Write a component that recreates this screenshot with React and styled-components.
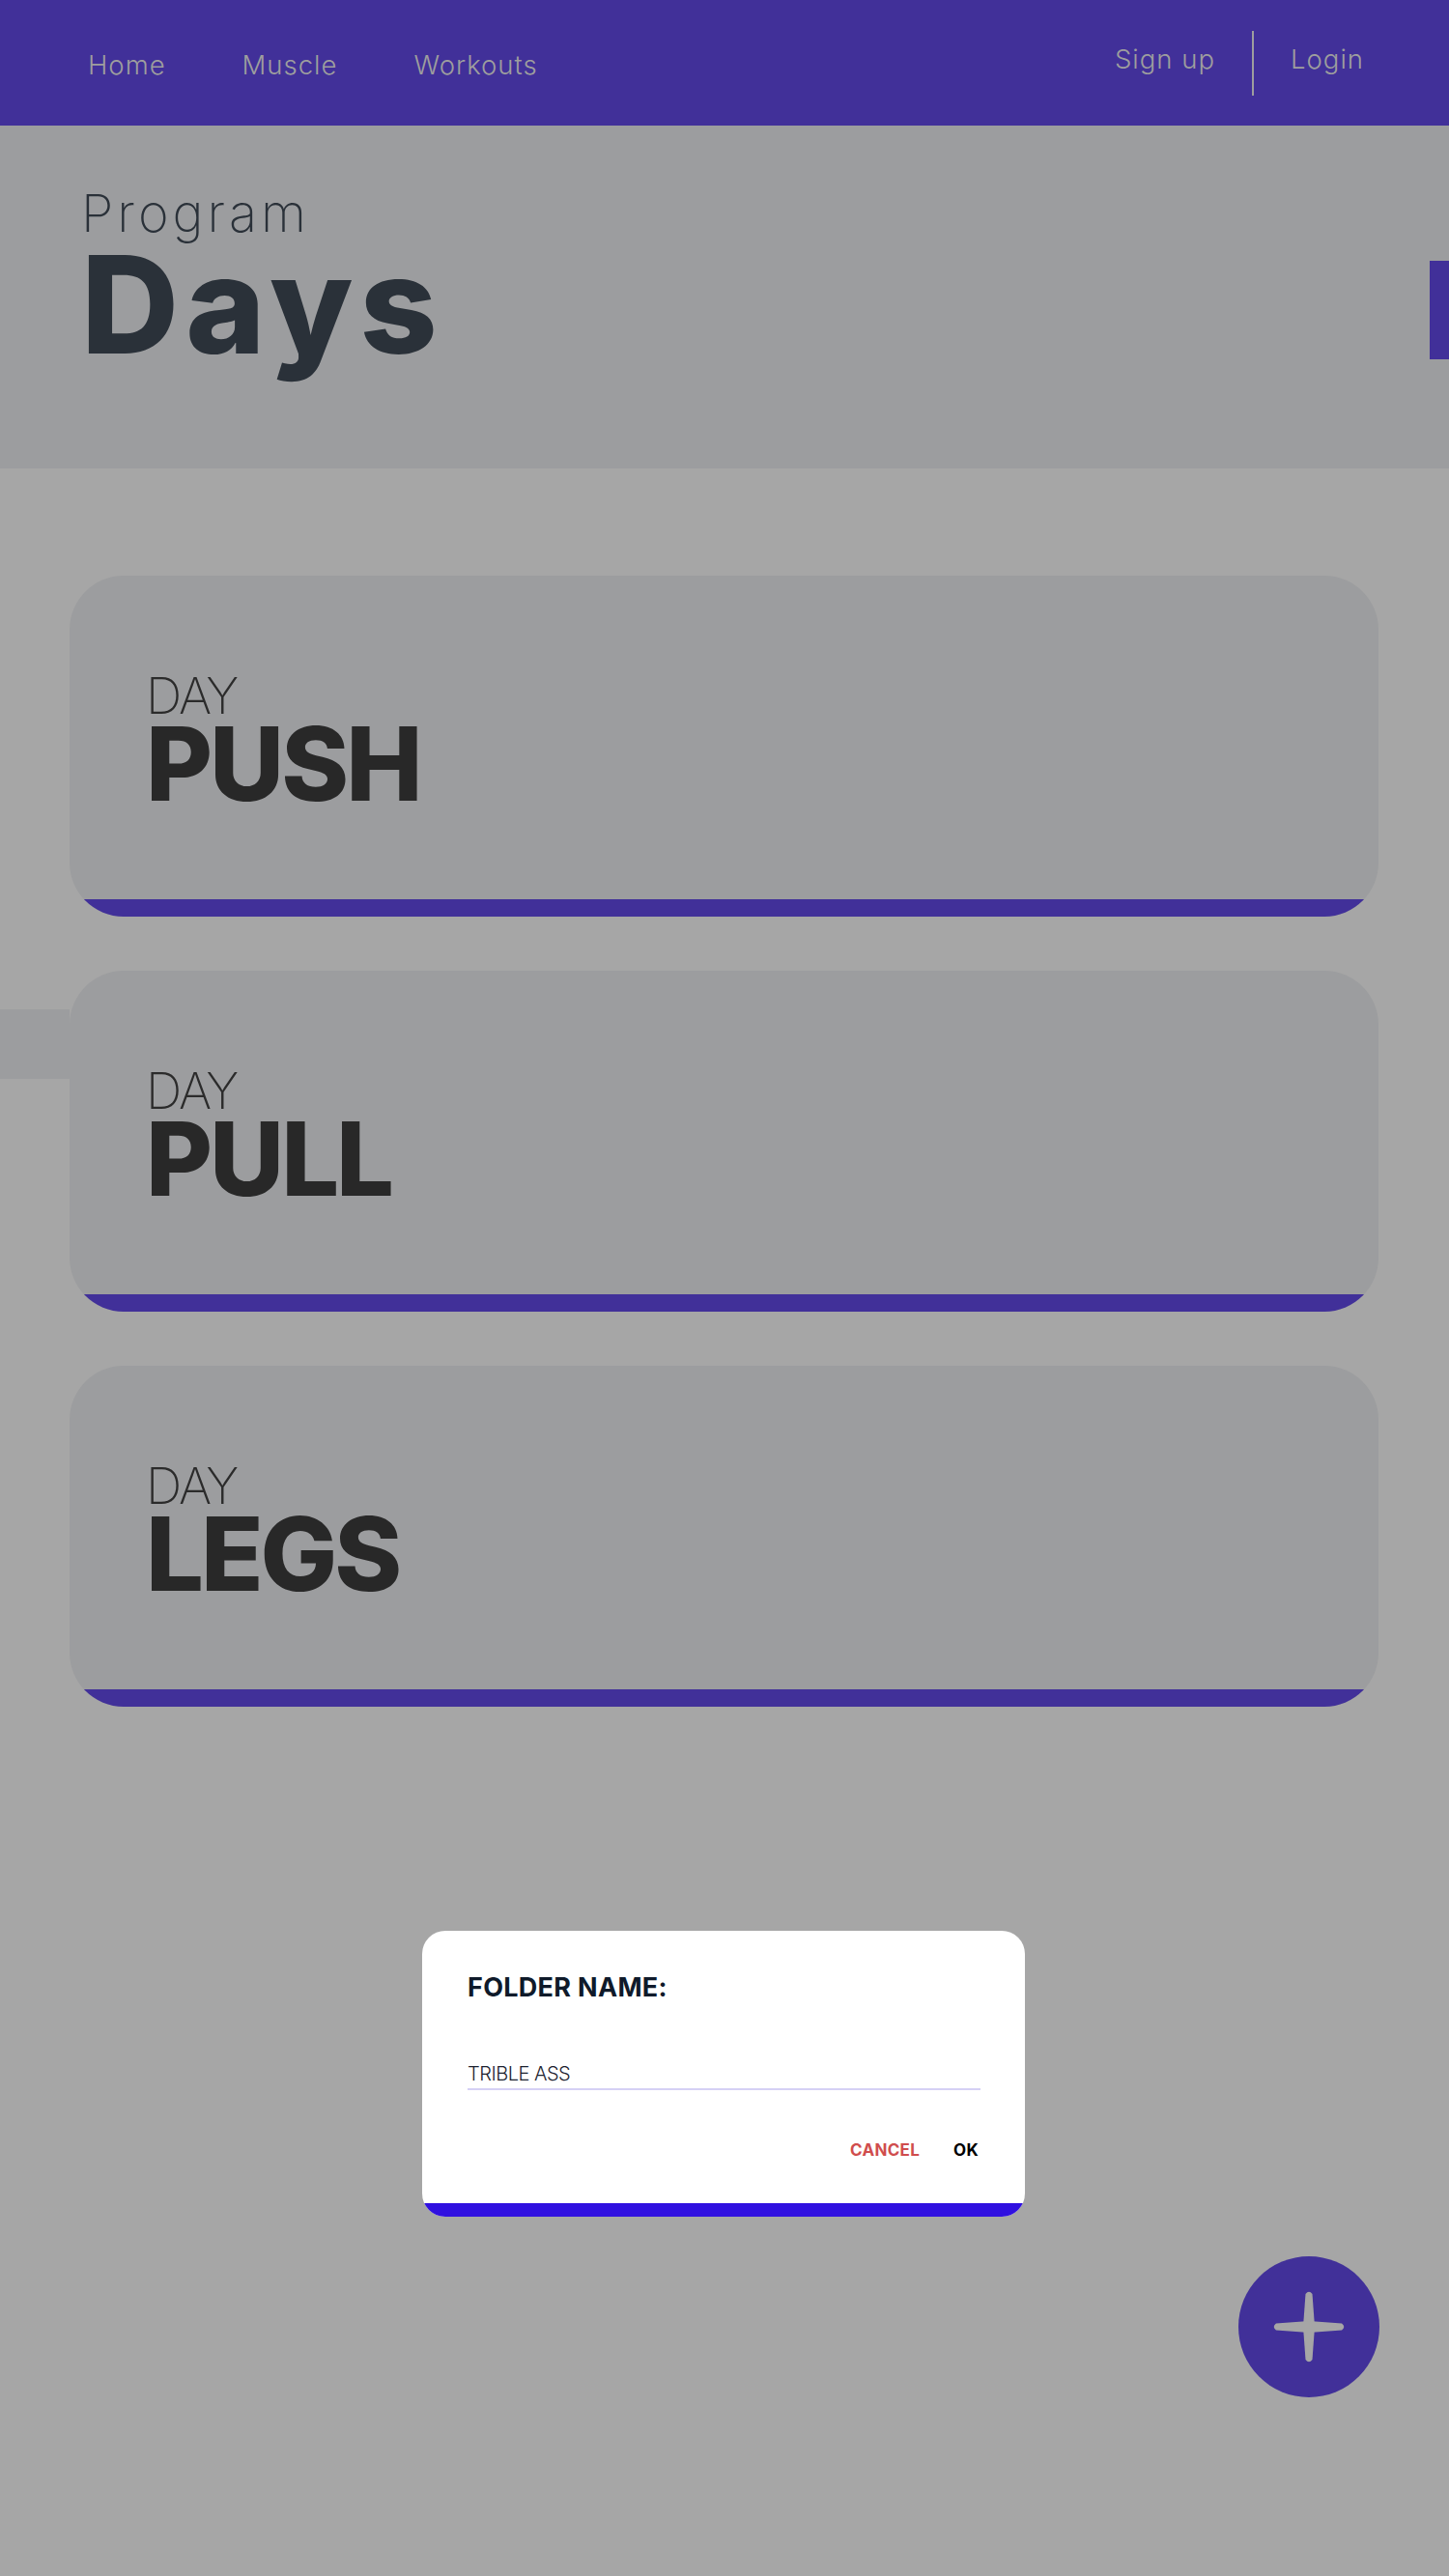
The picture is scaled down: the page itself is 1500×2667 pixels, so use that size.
import React from "react";
import styled, { createGlobalStyle } from "styled-components";

const GlobalStyle = createGlobalStyle`
  html, body {
    margin: 0;
    padding: 0;
    background: #a6a6a6;
  }
  * {
    box-sizing: border-box;
  }
`;

const Page = styled.div`
  position: relative;
  width: 1500px;
  min-height: 2667px;
  background: #a6a6a6;
  font-family: "Inter", "Noto Sans", sans-serif;
  overflow: hidden;
`;

const Header = styled.header`
  height: 130px;
  background: #413099;
  display: flex;
  align-items: center;
  justify-content: space-between;
  padding: 0 88px 0 91px;
`;

const NavLeft = styled.nav`
  display: flex;
  gap: 79px;
  padding-top: 6px;
`;

const NavRight = styled.div`
  display: flex;
  align-items: center;
  gap: 38px;
`;

const NavLink = styled.a`
  font-size: 27.5px;
  line-height: 1;
  font-weight: 300;
  letter-spacing: 1px;
  color: #9e9e9e;
  text-decoration: none;
  padding-bottom: ${(p) => (p.$raised ? "6px" : "0")};
`;

const Divider = styled.span`
  width: 2px;
  height: 67px;
  background: #9e9e9e;
`;

const Hero = styled.section`
  position: relative;
  height: 355px;
  background: #9c9d9f;
  padding: 64px 0 0 84px;
`;

const HeroSub = styled.div`
  font-size: 54px;
  line-height: 1;
  font-weight: 200;
  letter-spacing: 4px;
  color: #2a3139;
`;

const HeroTitle = styled.h1`
  margin: -3px 0 0 0;
  font-size: 140px;
  line-height: 1;
  font-weight: 800;
  letter-spacing: 7px;
  color: #2a3139;
`;

const SideTab = styled.span`
  position: absolute;
  right: 0;
  top: 140px;
  width: 20px;
  height: 102px;
  background: #413099;
`;

const CardList = styled.main`
  display: flex;
  flex-direction: column;
  gap: 56px;
  padding: 111px 73px 0 72px;
`;

const Card = styled.div`
  position: relative;
  height: 353px;
  border-radius: 56px;
  background: #9c9d9f;
`;

const CardInner = styled.div`
  height: 100%;
  border-radius: 56px;
  overflow: hidden;
  display: flex;
  flex-direction: column;
  align-items: flex-start;
  padding: 103px 0 0 79px;
  position: relative;
`;

const CardBar = styled.span`
  position: absolute;
  left: 0;
  right: 0;
  bottom: 0;
  height: 18px;
  background: #413099;
`;

const CardLabel = styled.div`
  font-size: 52px;
  line-height: 44px;
  font-weight: 200;
  letter-spacing: -2px;
  color: #2b2b2b;
`;

const CardTitle = styled.div`
  font-size: 106px;
  line-height: 96px;
  font-weight: 800;
  letter-spacing: -3px;
  color: #282828;
`;

const CardNub = styled.span`
  position: absolute;
  left: -72px;
  top: 40px;
  width: 72px;
  height: 72px;
  background: #9c9d9f;
`;

const Dialog = styled.div`
  position: absolute;
  left: 437px;
  top: 1999px;
  width: 624px;
  height: 296px;
  background: #ffffff;
  border-radius: 24px;
  overflow: hidden;
  padding: 45px 46px 0 47px;
`;

const DialogTitle = styled.h2`
  margin: 0;
  font-size: 27px;
  line-height: 28px;
  font-weight: 700;
  letter-spacing: 0.3px;
  color: #0f1a2a;
`;

const DialogInput = styled.div`
  margin-top: 65px;
  padding-bottom: 5px;
  border-bottom: 2px solid #d5d0f5;
  font-size: 20px;
  line-height: 1;
  font-weight: 300;
  letter-spacing: -0.5px;
  color: #1d2330;
`;

const DialogActions = styled.div`
  display: flex;
  justify-content: flex-end;
  gap: 35px;
  margin-top: 54px;
  padding-right: 2px;
`;

const ActionButton = styled.button`
  border: 0;
  background: none;
  padding: 0;
  font-family: inherit;
  font-size: 17px;
  line-height: 1;
  font-weight: 700;
  letter-spacing: 0.3px;
  color: ${(p) => (p.$danger ? "#d04d4d" : "#000000")};
`;

const DialogBar = styled.span`
  position: absolute;
  left: 0;
  right: 0;
  bottom: 0;
  height: 14px;
  background: #3010e0;
`;

const Fab = styled.button`
  position: absolute;
  left: 1282px;
  top: 2336px;
  width: 146px;
  height: 146px;
  border-radius: 50%;
  border: 0;
  padding: 0;
  background: #413099;
  display: flex;
  align-items: center;
  justify-content: center;
`;

const PlusIcon = () => (
  <svg width="146" height="146" viewBox="0 0 146 146">
    <path
      d="M69.5 39 Q73 34.5 76.5 39 L79 73 L76.5 107 Q73 111.5 69.5 107 L67 73 Z"
      fill="#a6a6a6"
    />
    <path
      d="M39 69.5 Q34.5 73 39 76.5 L73 79 L107 76.5 Q111.5 73 107 69.5 L73 67 Z"
      fill="#a6a6a6"
    />
  </svg>
);

const days = ["PUSH", "PULL", "LEGS"];

export default function App() {
  return (
    <Page>
      <GlobalStyle />
      <Header>
        <NavLeft>
          <NavLink>Home</NavLink>
          <NavLink>Muscle</NavLink>
          <NavLink>Workouts</NavLink>
        </NavLeft>
        <NavRight>
          <NavLink $raised>Sign up</NavLink>
          <Divider />
          <NavLink $raised>Login</NavLink>
        </NavRight>
      </Header>
      <Hero>
        <HeroSub>Program</HeroSub>
        <HeroTitle>Days</HeroTitle>
        <SideTab />
      </Hero>
      <CardList>
        {days.map((d, i) => (
          <Card key={d}>
            {i === 1 && <CardNub />}
            <CardInner>
              <CardLabel>DAY</CardLabel>
              <CardTitle>{d}</CardTitle>
              <CardBar />
            </CardInner>
          </Card>
        ))}
      </CardList>
      <Dialog>
        <DialogTitle>FOLDER NAME:</DialogTitle>
        <DialogInput>TRIBLE ASS</DialogInput>
        <DialogActions>
          <ActionButton $danger>CANCEL</ActionButton>
          <ActionButton>OK</ActionButton>
        </DialogActions>
        <DialogBar />
      </Dialog>
      <Fab>
        <PlusIcon />
      </Fab>
    </Page>
  );
}
